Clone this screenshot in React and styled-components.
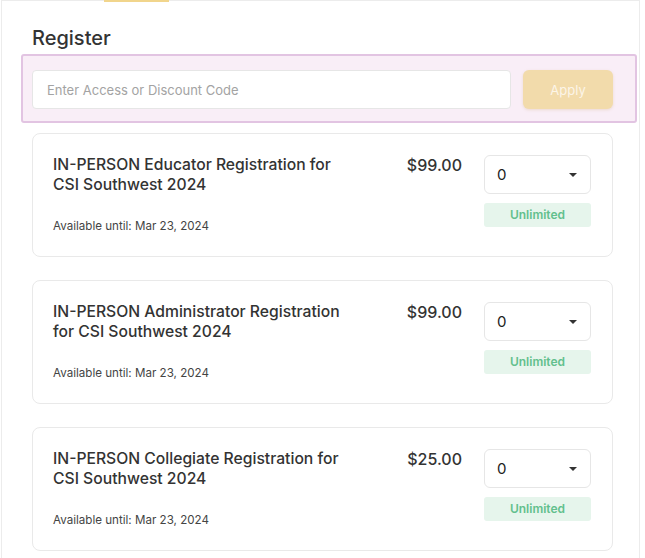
import styled, { createGlobalStyle } from 'styled-components';

const GlobalStyle = createGlobalStyle`
  html, body {
    margin: 0;
    padding: 0;
    background: #fff;
  }
  body {
    font-family: Inter, "Noto Sans", "Liberation Sans", sans-serif;
    color: #333;
    overflow: hidden;
  }
`;

const Panel = styled.div`
  position: relative;
  width: 637px;
  margin-left: 1px;
  border: 1px solid #ececec;
  border-bottom: none;
  padding-bottom: 20px;
`;

const TabIndicator = styled.div`
  position: absolute;
  top: -1px;
  left: 102px;
  width: 65px;
  height: 2px;
  background: #f1d58c;
`;

const Heading = styled.h2`
  margin: 25px 0 4px 30px;
  font-size: 20px;
  line-height: 24px;
  font-weight: 500;
  color: #333;
`;

const CodeBox = styled.div`
  display: flex;
  gap: 12px;
  margin: 0 0 10px 19px;
  width: 581px;
  padding: 14px 22px 12px 9px;
  border: 2px solid #e2c4e2;
  border-radius: 3px;
  background: #f9eef7;
`;

const CodeInput = styled.input`
  flex: 1;
  height: 39px;
  box-sizing: border-box;
  padding: 0 14px;
  border: 1px solid #e6e6e6;
  border-radius: 4px;
  background: #fff;
  font-family: inherit;
  font-size: 13px;
  color: #333;
  outline: none;

  &::placeholder {
    color: #a3a3a3;
  }
`;

const ApplyButton = styled.button`
  width: 90px;
  height: 39px;
  border: none;
  border-radius: 6px;
  background: #f2dbab;
  color: #fcf5e8;
  font-family: inherit;
  font-size: 13px;
  box-shadow: 0 1px 3px rgba(200, 160, 90, 0.25);
`;

const TicketList = styled.div`
  display: flex;
  flex-direction: column;
  gap: 23px;
  margin-left: 30px;
  width: 581px;
`;

const TicketCard = styled.div`
  display: flex;
  padding: 21px 21px 22px 20px;
  border: 1px solid #e9e9e9;
  border-radius: 8px;
  background: #fff;
`;

const InfoColumn = styled.div`
  display: flex;
  flex-direction: column;
  justify-content: space-between;
  width: 300px;
`;

const TicketTitle = styled.div`
  font-size: 15.7px;
  line-height: 20px;
  font-weight: 500;
  color: #333;
`;

const Availability = styled.div`
  font-size: 11.6px;
  line-height: 15px;
  color: #444;
`;

const Price = styled.div`
  margin-left: auto;
  font-size: 16px;
  line-height: 20px;
  font-weight: 500;
  color: #333;
`;

const QuantityColumn = styled.div`
  display: flex;
  flex-direction: column;
  gap: 9px;
  width: 107px;
  margin-left: 22px;
  padding-bottom: 7px;
`;

const Select = styled.div`
  display: flex;
  align-items: center;
  justify-content: space-between;
  height: 39px;
  box-sizing: border-box;
  padding: 0 13px 0 12px;
  border: 1px solid #e6e6e6;
  border-radius: 6px;
  font-size: 15px;
  color: #222;
`;

const Caret = styled.span`
  width: 0;
  height: 0;
  border-left: 4px solid transparent;
  border-right: 4px solid transparent;
  border-top: 4px solid #333;
`;

const Badge = styled.div`
  height: 24px;
  line-height: 24px;
  text-align: center;
  border-radius: 3px;
  background: #e6f5ec;
  color: #62c08d;
  font-size: 12px;
  font-weight: 600;
`;

const tickets = [
  { title: 'IN-PERSON Educator Registration for CSI Southwest 2024', price: '$99.00' },
  { title: 'IN-PERSON Administrator Registration for CSI Southwest 2024', price: '$99.00' },
  { title: 'IN-PERSON Collegiate Registration for CSI Southwest 2024', price: '$25.00' },
];

export default function App() {
  return (
    <>
      <GlobalStyle />
      <Panel>
        <TabIndicator />
        <Heading>Register</Heading>
        <CodeBox>
          <CodeInput placeholder="Enter Access or Discount Code" />
          <ApplyButton>Apply</ApplyButton>
        </CodeBox>
        <TicketList>
          {tickets.map((t, i) => (
            <TicketCard key={i}>
              <InfoColumn>
                <TicketTitle>{t.title}</TicketTitle>
                <Availability>Available until: Mar 23, 2024</Availability>
              </InfoColumn>
              <Price>{t.price}</Price>
              <QuantityColumn>
                <Select>
                  <span>0</span>
                  <Caret />
                </Select>
                <Badge>Unlimited</Badge>
              </QuantityColumn>
            </TicketCard>
          ))}
        </TicketList>
      </Panel>
    </>
  );
}
